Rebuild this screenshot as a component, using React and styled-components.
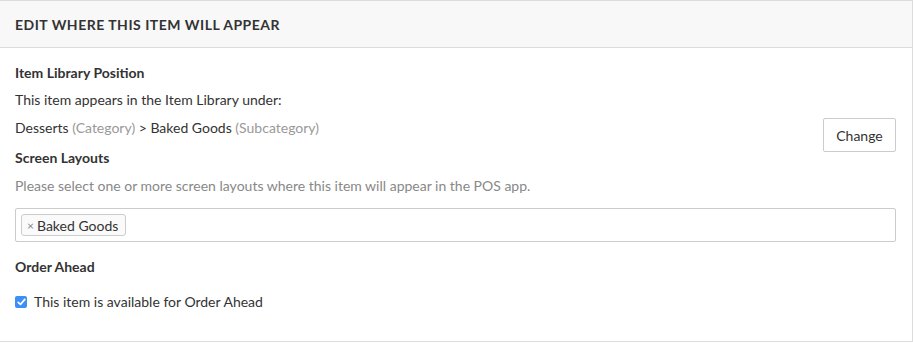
import React from "react";
import styled, { createGlobalStyle } from "styled-components";

const GlobalStyle = createGlobalStyle`
  body {
    margin: 0;
    background: #fff;
    font-family: Lato, "Open Sans", sans-serif;
    color: #333;
  }
`;

const App = () => {
  return (
    <>
      <GlobalStyle />
      <Panel>
        <Header>Edit where this item will appear</Header>
        <Body>
          <Heading>Item Library Position</Heading>
          <Text $gap={7}>This item appears in the Item Library under:</Text>
          <Text $gap={8}>
            <ChangeButton type="button">Change</ChangeButton>
            Desserts <Muted>(Category)</Muted> &gt; Baked Goods{" "}
            <Muted>(Subcategory)</Muted>
          </Text>

          <Heading $gap={10}>Screen Layouts</Heading>
          <Text $gap={8} $muted>
            Please select one or more screen layouts where this item will appear
            in the POS app.
          </Text>
          <TagInput>
            <Tag>
              <TagRemove>×</TagRemove>
              Baked Goods
            </Tag>
          </TagInput>

          <Heading $gap={15}>Order Ahead</Heading>
          <CheckRow>
            <CheckBox>
              <svg width="9" height="8" viewBox="0 0 9 8">
                <path
                  d="M1.2 4.3 L3.5 6.4 L7.8 1.4"
                  fill="none"
                  stroke="#fff"
                  strokeWidth="1.7"
                  strokeLinecap="round"
                  strokeLinejoin="round"
                />
              </svg>
            </CheckBox>
            This item is available for Order Ahead
          </CheckRow>
        </Body>
      </Panel>
    </>
  );
};

const Panel = styled.div`
  width: 912px;
  height: 340px;
  border: 1px solid #dcdcdc;
  border-left: none;
  background: #fff;
`;

const Header = styled.div`
  height: 46px;
  display: flex;
  align-items: center;
  padding: 0 15px;
  background: #f8f8f8;
  border-bottom: 1px solid #dcdcdc;
  font-size: 14px;
  font-weight: 700;
  text-transform: uppercase;
  letter-spacing: 0.5px;
  color: #333;
`;

const Body = styled.div`
  padding: 15px 16px 0 15px;
`;

const Heading = styled.div`
  margin-top: ${(p) => p.$gap || 0}px;
  font-size: 14px;
  font-weight: 700;
  line-height: 20px;
  color: #333;
`;

const Text = styled.div`
  margin-top: ${(p) => p.$gap || 0}px;
  font-size: 14px;
  line-height: 20px;
  color: ${(p) => (p.$muted ? "#888" : "#333")};
`;

const Muted = styled.span`
  color: #999;
`;

const ChangeButton = styled.button`
  float: right;
  width: 73px;
  height: 34px;
  padding: 0;
  background: #fff;
  border: 1px solid #ccc;
  border-radius: 2px;
  font-family: Lato, sans-serif;
  font-size: 14px;
  color: #333;
`;

const TagInput = styled.div`
  margin-top: 12px;
  height: 32px;
  border: 1px solid #ccc;
  border-radius: 2px;
  display: flex;
  align-items: center;
  padding: 0 5px;
`;

const Tag = styled.span`
  display: inline-flex;
  align-items: center;
  height: 20px;
  padding: 0 7px 0 5px;
  border: 1px solid #ccc;
  border-radius: 3px;
  background: #fafafa;
  font-size: 14px;
  color: #333;
`;

const TagRemove = styled.span`
  color: #888;
  font-size: 12px;
  margin-right: 3px;
`;

const CheckRow = styled.div`
  margin-top: 15px;
  display: flex;
  align-items: center;
  font-size: 14px;
  line-height: 20px;
  color: #333;
`;

const CheckBox = styled.span`
  width: 12px;
  height: 12px;
  margin-right: 7px;
  border-radius: 2px;
  background: #3b8ff6;
  display: inline-flex;
  align-items: center;
  justify-content: center;
`;

export default App;
